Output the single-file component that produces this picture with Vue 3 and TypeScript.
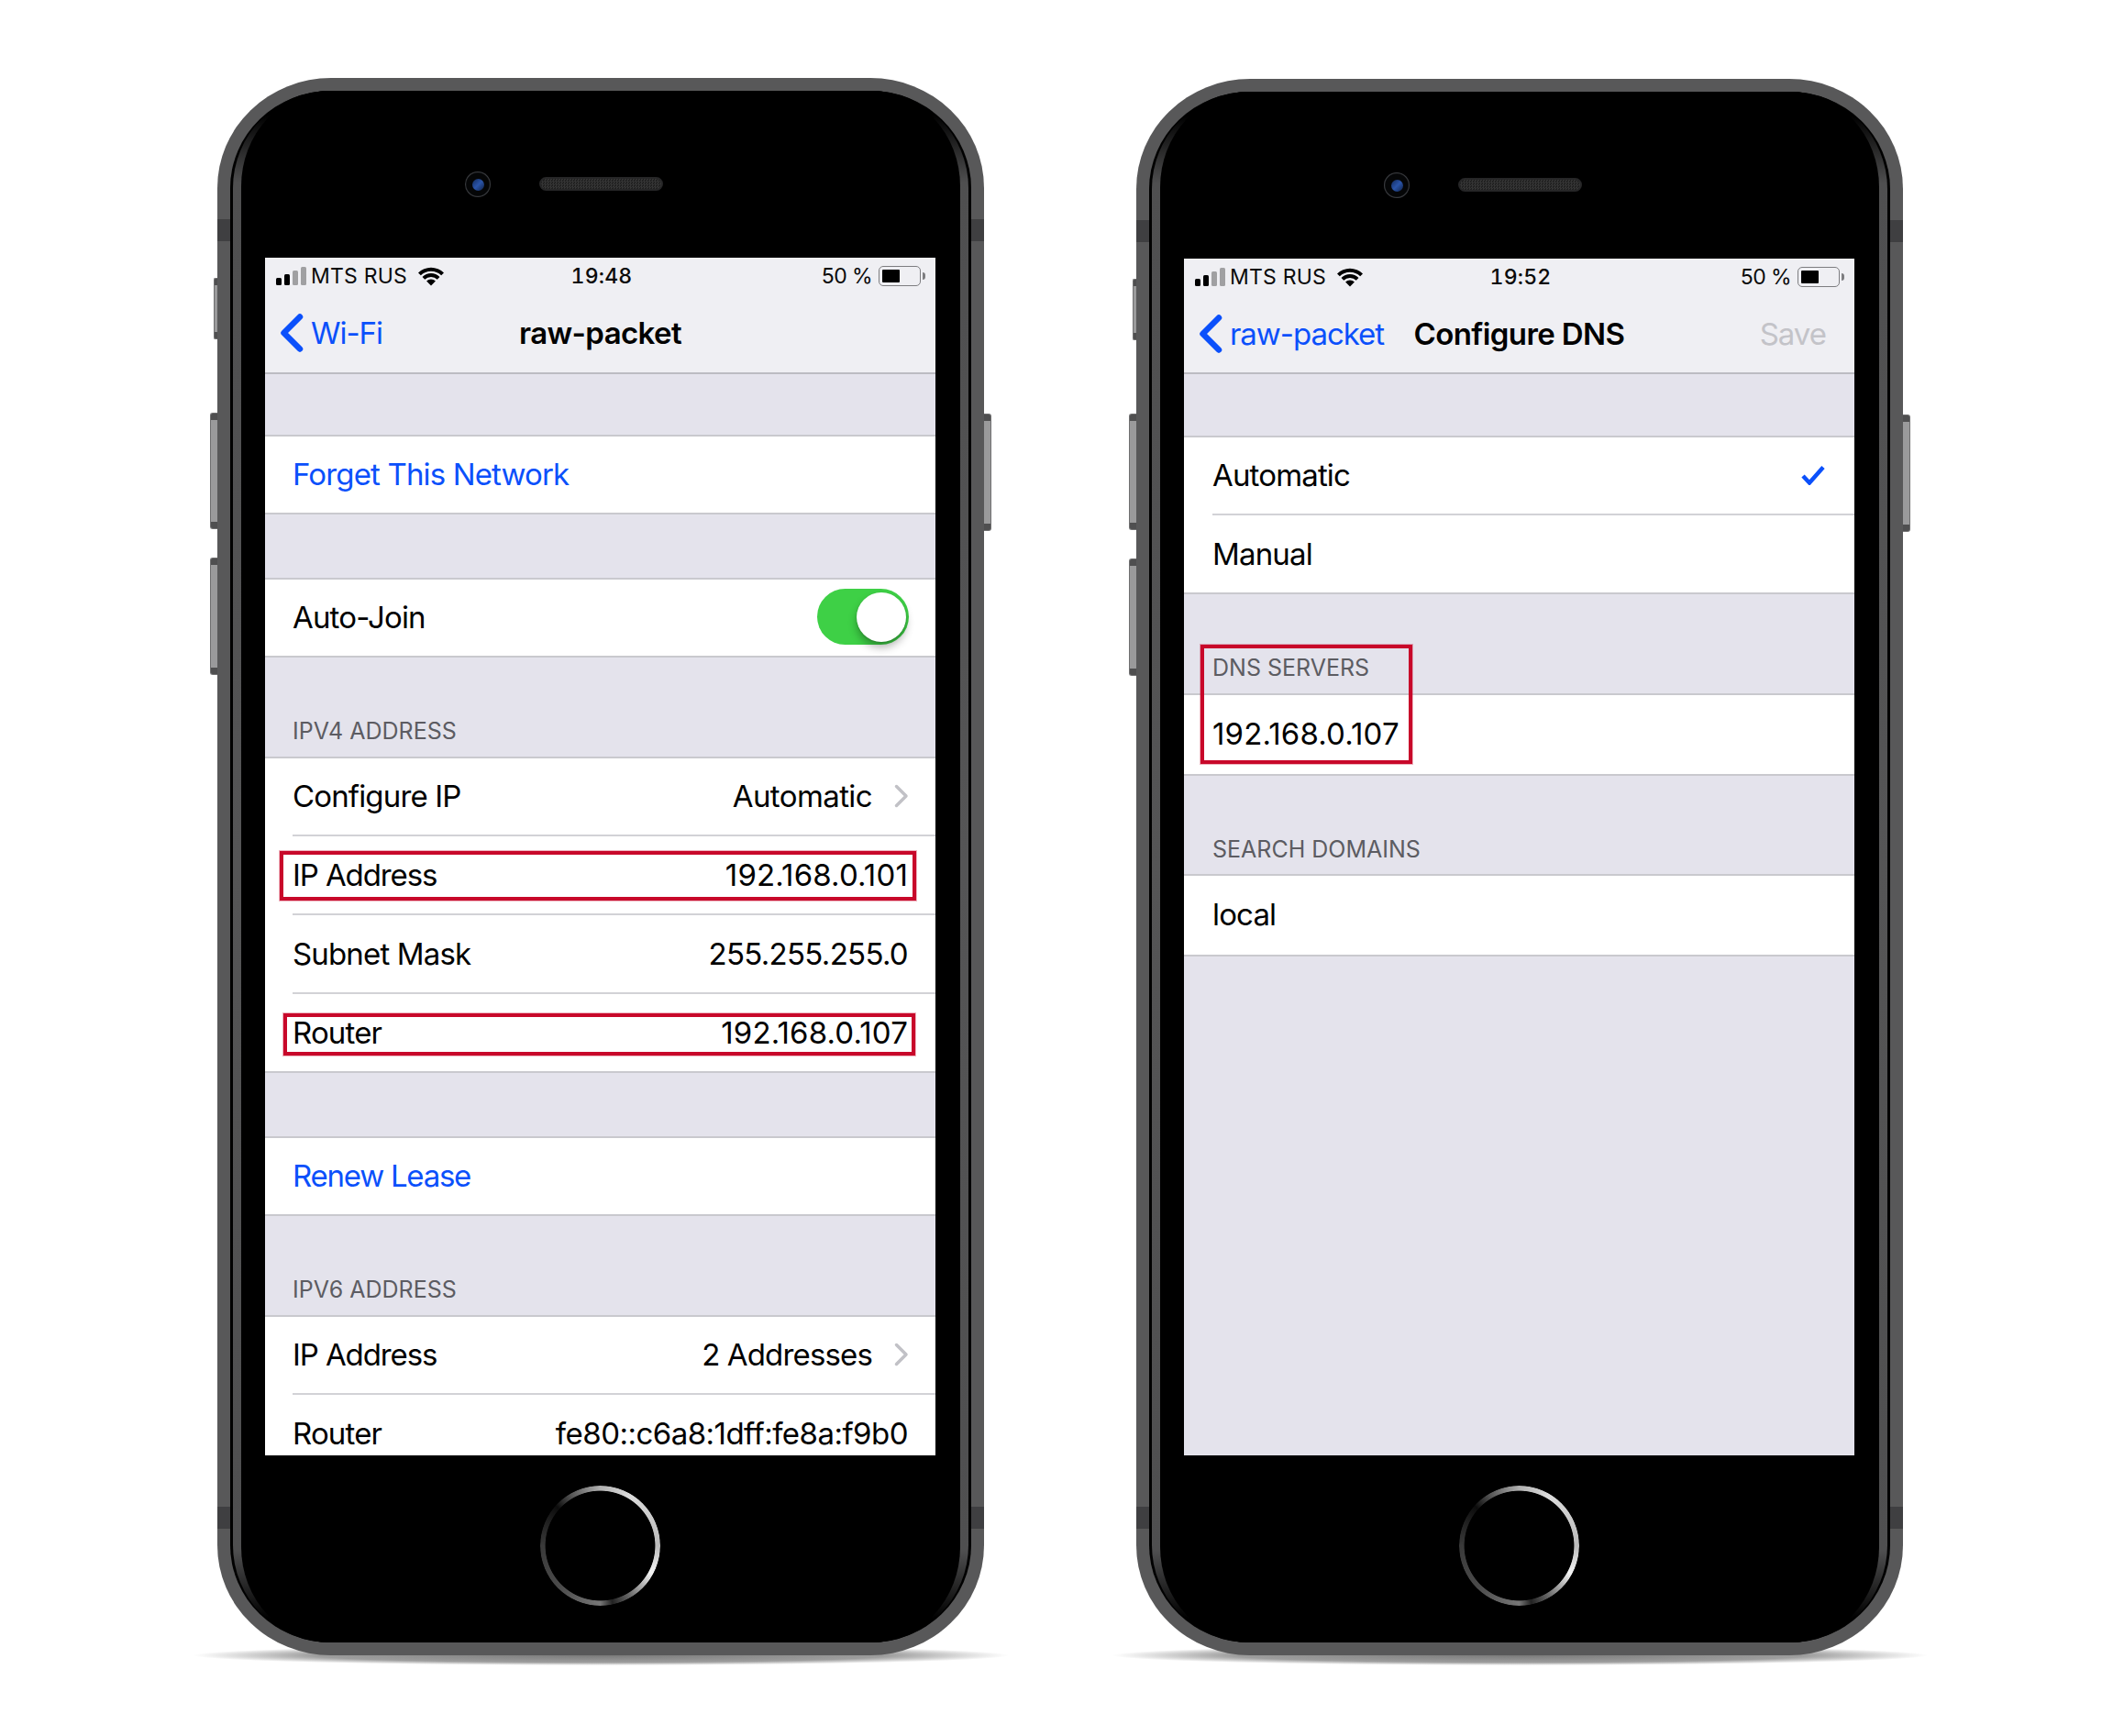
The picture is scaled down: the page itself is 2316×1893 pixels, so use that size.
<script setup lang="ts">
interface Phone {
  id: 'wifi' | 'dns'
  time: string
}
const phones: Phone[] = [
  { id: 'wifi', time: '19:48' },
  { id: 'dns', time: '19:52' },
]
</script>

<template>
  <div class="page">
    <div v-for="p in phones" :key="p.id" class="phone" :class="`phone--${p.id}`">
      <i class="btn btn--mute"></i>
      <i class="btn btn--up"></i>
      <i class="btn btn--down"></i>
      <i class="btn btn--power"></i>
      <i class="band band--tl"></i>
      <i class="band band--tr"></i>
      <i class="band band--bl"></i>
      <i class="band band--br"></i>
      <i class="ground"></i>
      <i class="inner"></i>
      <i class="rim"></i>
      <i class="face"></i>

      <div class="bezel-top">
        <div class="speaker"><i class="camera"><i class="lens"></i></i></div>
      </div>

      <div class="screen">
        <div class="status">
          <div class="status__left">
            <span class="signal"><i class="s1"></i><i class="s2"></i><i class="s3"></i><i class="s4"></i></span>
            <span class="carrier">MTS RUS</span>
            <svg class="wifi" width="28" height="21" viewBox="0 0 28 21">
              <path d="M0 6.5A19.8 19.8 0 0 1 28 6.5L25.17 9.33A15.8 15.8 0 0 0 2.83 9.33Z" />
              <path d="M4.52 11.03A13.4 13.4 0 0 1 23.48 11.03L20.79 13.71A9.6 9.6 0 0 0 7.21 13.71Z" />
              <path d="M9.05 15.55A7 7 0 0 1 18.95 15.55L14 20.5Z" />
            </svg>
          </div>
          <div class="status__time">{{ p.time }}</div>
          <div class="status__right">
            <span class="percent">50 %</span>
            <span class="battery"><i class="battery__fill"></i></span>
            <i class="battery__nub"></i>
          </div>
        </div>

        <div class="nav">
          <div class="nav__back">
            <svg class="back" width="26" height="42" viewBox="0 0 26 42">
              <path d="M21 3.5L3.5 21L21 38.5" />
            </svg>
            <span>{{ p.id === 'wifi' ? 'Wi-Fi' : 'raw-packet' }}</span>
          </div>
          <div class="nav__title">{{ p.id === 'wifi' ? 'raw-packet' : 'Configure DNS' }}</div>
          <div class="nav__save"><span v-if="p.id === 'dns'">Save</span></div>
        </div>

        <template v-if="p.id === 'wifi'">
          <div class="gap gap--66"></div>
          <div class="group">
            <div class="row row--link"><div class="row__in">Forget This Network</div></div>
          </div>

          <div class="gap gap--69"></div>
          <div class="group">
            <div class="row">
              <div class="row__in">
                <span>Auto-Join</span>
                <span class="toggle"><i class="toggle__knob"></i></span>
              </div>
            </div>
          </div>

          <div class="label"><span>IPV4 ADDRESS</span></div>
          <div class="group">
            <div class="row">
              <div class="row__in">
                <span>Configure IP</span>
                <span class="value">
                  <span class="val-word">Automatic</span>
                  <svg class="disclosure" width="16" height="26" viewBox="0 0 16 26"><path d="M2.5 2.5L13 13L2.5 23.5" /></svg>
                </span>
              </div>
            </div>
            <div class="row">
              <div class="row__in"><span class="lbl-ip">IP Address</span><span class="val-ip">192.168.0.101</span></div>
              <i class="mark mark--ip"></i>
            </div>
            <div class="row">
              <div class="row__in"><span>Subnet Mask</span><span class="val-mask">255.255.255.0</span></div>
            </div>
            <div class="row">
              <div class="row__in"><span>Router</span><span class="val-ip">192.168.0.107</span></div>
              <i class="mark mark--router"></i>
            </div>
          </div>

          <div class="gap gap--69"></div>
          <div class="group">
            <div class="row row--link row--renew"><div class="row__in">Renew Lease</div></div>
          </div>

          <div class="label"><span>IPV6 ADDRESS</span></div>
          <div class="group">
            <div class="row">
              <div class="row__in">
                <span class="lbl-ip">IP Address</span>
                <span class="value">
                  <span>2 Addresses</span>
                  <svg class="disclosure" width="16" height="26" viewBox="0 0 16 26"><path d="M2.5 2.5L13 13L2.5 23.5" /></svg>
                </span>
              </div>
            </div>
            <div class="row">
              <div class="row__in"><span>Router</span><span class="val-v6">fe80::c6a8:1dff:fe8a:f9b0</span></div>
            </div>
          </div>
        </template>

        <template v-else>
          <div class="gap gap--67"></div>
          <div class="group group--choice">
            <div class="row">
              <div class="row__in">
                <span>Automatic</span>
                <svg class="check" width="28" height="22" viewBox="0 0 28 22"><path d="M3 12L10 19.5L25 2.5" /></svg>
              </div>
            </div>
            <div class="row"><div class="row__in"><span>Manual</span></div></div>
          </div>

          <div class="dns">
            <div class="label"><span>DNS SERVERS</span></div>
            <div class="group group--tall">
              <div class="row"><div class="row__in"><span class="val-ip">192.168.0.107</span></div></div>
            </div>
            <i class="mark mark--dns"></i>
          </div>

          <div class="label label--107"><span>SEARCH DOMAINS</span></div>
          <div class="group group--tall">
            <div class="row"><div class="row__in">local</div></div>
          </div>
        </template>
      </div>

      <div class="bezel-bottom"><i class="home"></i></div>
    </div>
  </div>
</template>

<style>
html,
body {
  margin: 0;
  background: #fff;
}
</style>

<style scoped>
.page {
  width: 2316px;
  height: 1893px;
  box-sizing: border-box;
  padding: 85px 0 0 237px;
  display: flex;
  align-items: flex-start;
  gap: 166px;
  background: #fff;
  overflow: hidden;
  font-family: Inter, "Liberation Sans", sans-serif;
  color: #000;
}

.phone {
  position: relative;
  flex: none;
  width: 836px;
  height: 1720px;
  box-sizing: border-box;
  padding: 0 53px 0 52px;
  display: flex;
  flex-direction: column;
}
.phone--dns {
  margin-top: 1px;
  height: 1719px;
}

.ground {
  position: absolute;
  left: -26px;
  right: -27px;
  bottom: -11px;
  height: 22px;
  background: radial-gradient(ellipse closest-side, rgba(40, 40, 40, 0.62) 0%, rgba(60, 60, 60, 0.5) 70%, rgba(80, 80, 80, 0) 100%);
}
.inner {
  position: absolute;
  inset: 0;
  background: #585859;
  border-radius: 124px / 120px;
}
.band {
  position: absolute;
  width: 14px;
  height: 24px;
  background: #3f3f41;
  z-index: 1;
}
.band--tl { left: 0; top: 154px; }
.band--tr { right: 0; top: 154px; }
.band--bl { left: 0; bottom: 138px; }
.band--br { right: 0; bottom: 138px; }

.rim {
  position: absolute;
  z-index: 1;
  inset: 14px 14px;
  border-radius: 110px / 106px;
  background: #000;
}
.rim::after {
  content: "";
  position: absolute;
  inset: 0 3px;
  border-radius: 106px / 106px;
  background: linear-gradient(#000 26px, #4f4f50 100px, #555556 50%, #4f4f50 calc(100% - 100px), #000 calc(100% - 26px));
}
.face {
  position: absolute;
  z-index: 1;
  inset: 14px 26px;
  border-radius: 97px / 104px;
  background: #000;
}

.bezel-top {
  position: relative;
  z-index: 2;
  height: 196px;
  flex: none;
  box-sizing: border-box;
  padding-top: 35px;
  display: flex;
  align-items: center;
  justify-content: center;
}
.speaker {
  position: relative;
  width: 135px;
  height: 15px;
  margin-left: 2px;
  box-sizing: border-box;
  border: 2px solid #262627;
  border-radius: 8px;
  background: repeating-conic-gradient(#353535 0 25%, #202020 0 50%) 0 0 / 3px 3px;
}
.camera {
  position: absolute;
  left: -83px;
  top: -8px;
  width: 28px;
  height: 28px;
  border-radius: 50%;
  background: radial-gradient(circle, #050607 0 62%, #393b3f 68% 100%);
  display: flex;
  align-items: center;
  justify-content: center;
}
.lens {
  width: 13px;
  height: 13px;
  border-radius: 50%;
  background: linear-gradient(135deg, #122a5c, #2a54a8 50%, #102247);
}

.bezel-bottom {
  position: relative;
  z-index: 2;
  flex: 1;
  display: flex;
  align-items: center;
  justify-content: center;
  padding-bottom: 22px;
}
.home {
  width: 131px;
  height: 131px;
  border-radius: 50%;
  background: conic-gradient(#b0b0b0 0deg, #dcdcdc 30deg, #bbb 90deg, #f5f5f5 118deg, #666 150deg, #222 168deg, #777 180deg, #4a4a4a 225deg, #3a3a3a 270deg, #0c0c0c 312deg, #555 330deg, #b0b0b0 360deg);
  -webkit-mask: radial-gradient(closest-side, transparent calc(100% - 6px), #000 calc(100% - 5.2px));
  mask: radial-gradient(closest-side, transparent calc(100% - 6px), #000 calc(100% - 5.2px));
}

.btn {
  position: absolute;
  box-sizing: border-box;
  border: 1px solid #6f6f70;
  background: linear-gradient(#4f4f50 0 7px, #9a9a9b 7px calc(100% - 7px), #4f4f50 calc(100% - 7px));
}
.btn--mute { left: -4px; width: 4px; top: 218px; height: 67px; border-right: 0; border-radius: 2px 0 0 2px; }
.btn--up { left: -8px; width: 8px; top: 365px; height: 127px; border-right: 0; border-radius: 3px 0 0 3px; }
.btn--down { left: -8px; width: 8px; top: 523px; height: 128px; border-right: 0; border-radius: 3px 0 0 3px; }
.btn--power { right: -8px; width: 8px; top: 366px; height: 128px; border-left: 0; border-radius: 0 3px 3px 0; }

.screen {
  position: relative;
  z-index: 2;
  flex: none;
  width: 731px;
  height: 1306px;
  overflow: hidden;
  background: #e4e3ec;
}
.phone--dns .screen {
  height: 1305px;
}

.status {
  height: 40px;
  background: #efeff3;
  display: grid;
  grid-template-columns: 1fr auto 1fr;
  align-items: center;
  font-size: 23px;
  color: #0a0a0a;
}
.status__left {
  display: flex;
  align-items: center;
  padding-left: 12px;
}
.signal {
  display: flex;
  align-items: flex-end;
  gap: 3px;
  height: 20px;
  margin-right: 5px;
}
.signal i {
  width: 6px;
  border-radius: 1.5px;
  background: #000;
}
.signal .s1 { height: 8px; }
.signal .s2 { height: 12px; }
.signal .s3 { height: 16px; background: #a0a0a2; }
.signal .s4 { height: 20px; background: #a0a0a2; }
.carrier {
  letter-spacing: 0.2px;
}
.wifi {
  margin-left: 12px;
  fill: #000;
}
.status__time {
  font-weight: 500;
  font-feature-settings: "tnum";
  letter-spacing: 0.2px;
  margin-left: 3px;
}
.status__right {
  display: flex;
  align-items: center;
  justify-content: flex-end;
  padding-right: 11px;
}
.percent {
  letter-spacing: -0.6px;
}
.battery {
  box-sizing: border-box;
  width: 46px;
  height: 22px;
  margin-left: 7px;
  padding: 3px;
  border: 1.5px solid #7d7d80;
  border-radius: 5px;
  display: flex;
}
.battery__fill {
  width: 19px;
  background: #000;
  border-radius: 1px;
}
.battery__nub {
  width: 3px;
  height: 8px;
  margin-left: 2px;
  background: #7d7d80;
  border-radius: 0 3px 3px 0;
}

.nav {
  height: 85px;
  border-bottom: 2px solid #bcbcc2;
  background: #efeff3;
  display: grid;
  grid-template-columns: 1fr auto 1fr;
  align-items: center;
  font-size: 33px;
  box-sizing: content-box;
}
.phone--wifi .nav {
  height: 83px;
  padding-bottom: 2px;
}
.phone--dns .nav {
  height: 84px;
}
.nav__back {
  display: flex;
  align-items: center;
  color: #0b50fb;
  padding-left: 17px;
  letter-spacing: -1.05px;
}
.back {
  fill: none;
  stroke: #0b50fb;
  stroke-width: 6.5;
  stroke-linecap: round;
  stroke-linejoin: round;
  margin-right: 7px;
}
.nav__title {
  font-weight: 600;
  letter-spacing: -0.6px;
}
.nav__save {
  display: flex;
  justify-content: flex-end;
  padding-right: 31px;
  color: #c3c3c8;
  letter-spacing: -1px;
}

.gap--66 { height: 66px; }
.gap--67 { height: 67px; }
.gap--69 { height: 69px; }

.label {
  height: 108px;
  box-sizing: border-box;
  padding: 0 30px 15px;
  display: flex;
  align-items: flex-end;
  font-size: 25px;
  line-height: 26px;
  color: #5c5c62;
}
.label--107 {
  height: 107px;
  padding-bottom: 14px;
}
.phone--dns .label {
  padding-left: 31px;
}

.group {
  background: #fff;
  border-top: 2px solid #c9c9ce;
  border-bottom: 2px solid #c9c9ce;
}
.row {
  position: relative;
  padding-left: 30px;
  font-size: 33px;
  letter-spacing: -0.85px;
}
.phone--dns .row {
  padding-left: 31px;
}
.row__in {
  height: 83px;
  box-sizing: border-box;
  padding: 0 30px 2px 0;
  display: flex;
  align-items: center;
  justify-content: space-between;
}
.row + .row .row__in {
  height: 86px;
  padding-bottom: 0;
  border-top: 2px solid #d2d2d6;
}
.group--tall .row__in {
  height: 86px;
}
.row--link {
  color: #0b50fb;
}
.row--renew {
  letter-spacing: -1.25px;
}
.lbl-ip { letter-spacing: -1.1px; }
.val-word { letter-spacing: -0.6px; }
.val-ip { letter-spacing: 0.15px; }
.val-mask { letter-spacing: -0.7px; }
.val-v6 { letter-spacing: -0.53px; }
.value {
  display: flex;
  align-items: center;
  gap: 24px;
}
.disclosure {
  fill: none;
  stroke: #c1c1c6;
  stroke-width: 3.5;
  stroke-linecap: round;
  stroke-linejoin: round;
  margin-right: -1px;
}
.check {
  fill: none;
  stroke: #0b50fb;
  stroke-width: 4.5;
  margin-right: 1px;
}

.toggle {
  position: relative;
  width: 100px;
  height: 61px;
  border-radius: 31px;
  background: #3ed046;
  margin-right: -1px;
}
.toggle__knob {
  position: absolute;
  right: 3px;
  top: 4px;
  width: 54px;
  height: 54px;
  border-radius: 50%;
  background: #fff;
  box-shadow: 0 6px 10px rgba(0, 0, 0, 0.3), 0 1px 2px rgba(0, 0, 0, 0.15);
}

.dns {
  position: relative;
}
.mark {
  position: absolute;
  box-sizing: border-box;
  border: 4px solid #c8082a;
  box-shadow: 0 0 0 1px rgba(200, 8, 42, 0.3);
  pointer-events: none;
}
.mark--ip {
  left: 16px;
  right: 21px;
  top: 18px;
  height: 54px;
}
.mark--router {
  left: 20px;
  right: 22px;
  top: 23px;
  height: 46px;
}
.mark--dns {
  left: 18px;
  width: 231px;
  top: 55px;
  height: 130px;
}
</style>
